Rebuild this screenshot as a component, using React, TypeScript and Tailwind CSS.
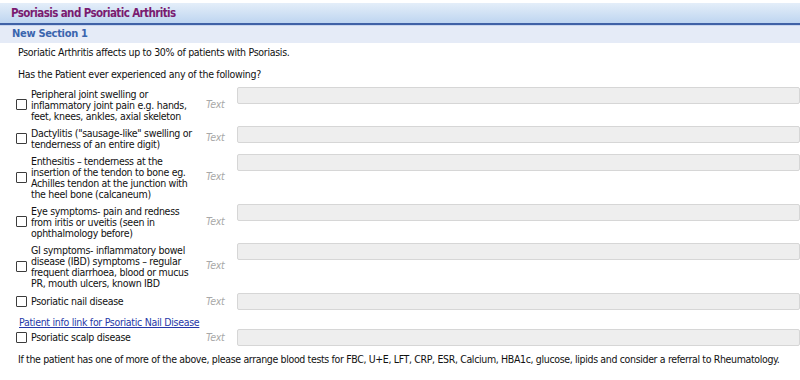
const items: { label: string[] }[] = [
  { label: ["Peripheral joint swelling or", "inflammatory joint pain e.g. hands,", "feet, knees, ankles, axial skeleton"] },
  { label: ["Dactylitis (\"sausage-like\" swelling or", "tenderness of an entire digit)"] },
  {
    label: [
      "Enthesitis \u2013 tenderness at the",
      "insertion of the tendon to bone eg.",
      "Achilles tendon at the junction with",
      "the heel bone (calcaneum)",
    ],
  },
  { label: ["Eye symptoms- pain and redness", "from iritis or uveitis (seen in", "ophthalmology before)"] },
  {
    label: [
      "GI symptoms- inflammatory bowel",
      "disease (IBD) symptoms \u2013 regular",
      "frequent diarrhoea, blood or mucus",
      "PR, mouth ulcers, known IBD",
    ],
  },
  { label: ["Psoriatic nail disease"] },
]

function Row({ label }: { label: string[] }) {
  const multi = label.length > 1
  return (
    <div className="flex items-start">
      <div className="flex min-h-[17px] w-[230px] items-center self-stretch">
        <span className="ml-[16px] h-[11px] w-[11px] shrink-0 rounded-[1px] border border-[#3c3c3c] bg-white" />
        <div className={multi ? "ml-[4px] w-[170px] whitespace-nowrap pt-[2px] leading-[11px] text-[#111]" : "ml-[4px] w-[170px] whitespace-nowrap leading-[11px] text-[#111]"}>
          {label.map((l, i) => (
            <div key={i}>{l}</div>
          ))}
        </div>
        <span className="ml-[5px] italic text-[#a8a8a8]">Text</span>
      </div>
      <div className="ml-[7px] h-[17px] flex-1 rounded-[2px] border border-[#d6d6d6] bg-[#eeeeee]" />
    </div>
  )
}

export default function App() {
  return (
    <div className="h-[380px] w-[800px] overflow-hidden bg-white pt-[3px] font-['DejaVu_Sans_Condensed','DejaVu_Sans',sans-serif] text-[10.5px] tracking-[-0.3px]">
      <div className="h-[22px] border-b-2 border-[#3f61a6] bg-linear-to-b from-[#e4eef9] to-[#bed5f0] pl-[11px] text-[11.5px] font-bold leading-[21px] tracking-[-0.6px] text-[#7a1b70]">
        Psoriasis and Psoriatic Arthritis
      </div>
      <div className="h-[18px] border-t border-[#c9d6ee] bg-[#e5ebf7] pl-[12px] text-[11px] font-bold leading-[15px] text-[#3a65ae]">
        New Section 1
      </div>
      <p className="mt-[3px] pl-[18px] leading-[13px] text-[#111]">Psoriatic Arthritis affects up to 30% of patients with Psoriasis.</p>
      <p className="mt-[9px] pl-[18px] leading-[13px] text-[#111]">Has the Patient ever experienced any of the following?</p>
      <div className="mt-[6px] flex flex-col gap-[4px]">
        {items.map((it, i) => (
          <Row key={i} label={it.label} />
        ))}
      </div>
      <a href="#" className="ml-[19px] mt-[6px] block w-fit leading-[13px] text-[#2638a8] underline">
        Patient info link for Psoriatic Nail Disease
      </a>
      <div className="mt-0">
        <Row label={["Psoriatic scalp disease"]} />
      </div>
      <p className="mt-[7px] whitespace-nowrap pl-[18px] leading-[13px] tracking-[-0.35px] text-[#111]">
        If the patient has one of more of the above, please arrange blood tests for FBC, U+E, LFT, CRP, ESR, Calcium, HBA1c, glucose, lipids and consider a referral to Rheumatology.
      </p>
    </div>
  )
}
